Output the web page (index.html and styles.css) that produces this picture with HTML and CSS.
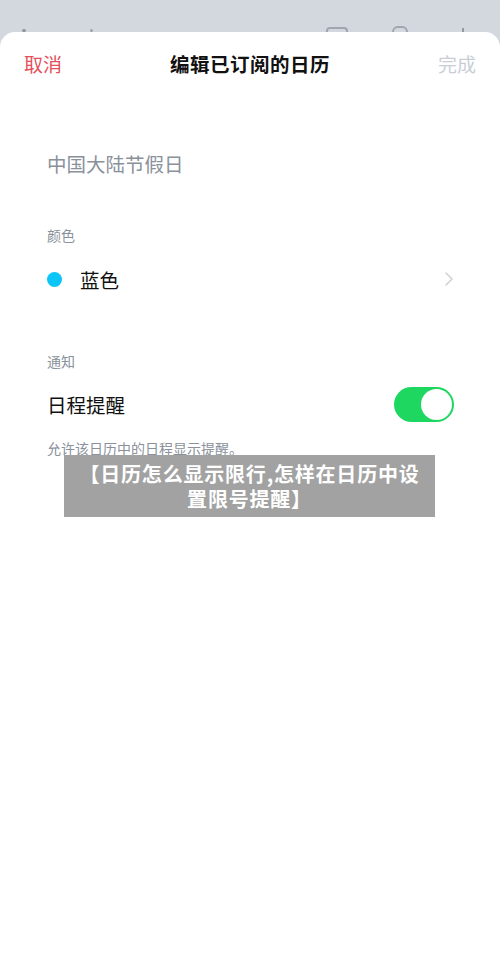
FILE: index.html
```html
<!DOCTYPE html>
<html lang="zh">
<head>
<meta charset="utf-8">
<link rel="stylesheet" href="styles.css">
</head>
<body>
<div class="topbar">
  <span class="peek peek-a"></span>
  <span class="peek peek-b"></span>
  <span class="peek-spacer"></span>
  <span class="peek peek-sq"></span>
  <span class="peek peek-circ"></span>
  <span class="peek peek-dot"></span>
</div>
<div class="sheet">
  <div class="header">
    <span class="cancel">取消</span>
    <span class="title">编辑已订阅的日历</span>
    <span class="done">完成</span>
  </div>
  <div class="content">
    <div class="calname">中国大陆节假日</div>
    <div class="label label-color">颜色</div>
    <div class="row row-color">
      <span class="dot"></span>
      <span class="row-text">蓝色</span>
      <svg class="chev" width="10" height="16" viewBox="0 0 10 16"><path d="M2 2 L8 8 L2 14" fill="none" stroke="#cfd3d8" stroke-width="1.6" stroke-linecap="round" stroke-linejoin="round"/></svg>
    </div>
    <div class="label label-notify">通知</div>
    <div class="row row-notify">
      <span class="row-text plain">日程提醒</span>
      <span class="toggle"><span class="knob"></span></span>
    </div>
    <div class="helper">允许该日历中的日程显示提醒。</div>
  </div>
  <div class="banner">
    <div class="banner-line">【日历怎么显示限行,怎样在日历中设</div>
    <div class="banner-line">置限号提醒】</div>
  </div>
</div>
</body>
</html>
```
FILE: styles.css
```css
* { box-sizing: border-box; }
html, body { margin: 0; padding: 0; }
body {
  width: 500px;
  height: 974px;
  overflow: hidden;
  background: #d3d8de;
  font-family: "Noto Sans CJK SC", "Noto Sans", sans-serif;
}
.topbar {
  height: 32px;
  display: flex;
  align-items: flex-end;
  padding: 0 0 0 22px;
  overflow: hidden;
}
.peek { display: block; }
.peek-a { width: 4px; height: 3px; background: #6b7078; border-radius: 2px; opacity: .6; }
.peek-b { width: 3px; height: 3px; background: #6b7078; border-radius: 2px; margin-left: 64px; opacity: .5; }
.peek-spacer { flex: 1; }
.peek-sq { width: 22px; height: 5px; border: 2px solid #8d929a; border-bottom: none; border-radius: 4px 4px 0 0; margin-right: 44px; opacity: .7; }
.peek-circ { width: 16px; height: 6px; border: 2px solid #8d929a; border-bottom: none; border-radius: 8px 8px 0 0; margin-right: 54px; opacity: .7; }
.peek-dot { width: 2px; height: 4px; background: #6b7078; margin-right: 36px; opacity: .6; }
.sheet {
  position: relative;
  background: #ffffff;
  border-radius: 15px 15px 0 0;
  height: 942px;
}
.header {
  height: 63px;
  display: flex;
  align-items: center;
  justify-content: space-between;
  padding: 0 24px;
}
.cancel { color: #e4505b; font-size: 19px; }
.title { color: #111; font-size: 19.5px; font-weight: 700; letter-spacing: 0.5px; }
.done { color: #c9ced6; font-size: 19px; }
.content { padding: 0 47px; }
.calname {
  margin-top: 55px;
  height: 28px;
  line-height: 28px;
  font-size: 19.5px;
  color: #8a919b;
}
.label {
  height: 20px;
  line-height: 20px;
  font-size: 14px;
  color: #8a919b;
}
.label-color { margin-top: 47px; }
.label-notify { margin-top: 50px; }
.row {
  height: 44px;
  display: flex;
  align-items: center;
}
.row-color { margin-top: 12px; }
.row-notify { margin-top: 11px; }
.dot {
  width: 15px;
  height: 15px;
  border-radius: 50%;
  background: #0bc5f6;
  margin-right: 18px;
}
.row-text { flex: 1; font-size: 19.5px; color: #111; }
.chev { margin-right: -1px; }
.toggle {
  width: 60px;
  height: 35px;
  border-radius: 18px;
  background: #1ed760;
  display: flex;
  align-items: center;
  justify-content: flex-end;
  padding: 2px;
  margin-right: -1px;
}
.knob {
  width: 31px;
  height: 31px;
  border-radius: 50%;
  background: #fff;
}
.helper {
  margin-top: 12px;
  height: 20px;
  line-height: 20px;
  font-size: 14px;
  color: #8a919b;
}
.banner {
  position: absolute;
  left: 64px;
  top: 423px;
  width: 371px;
  height: 62px;
  background: #a2a2a2;
  color: #fff;
  font-size: 20px;
  font-weight: 700;
  text-align: center;
  padding-top: 6px;
  letter-spacing: 0.8px;
}
.banner-line {
  height: 25px;
  line-height: 25px;
}
```
